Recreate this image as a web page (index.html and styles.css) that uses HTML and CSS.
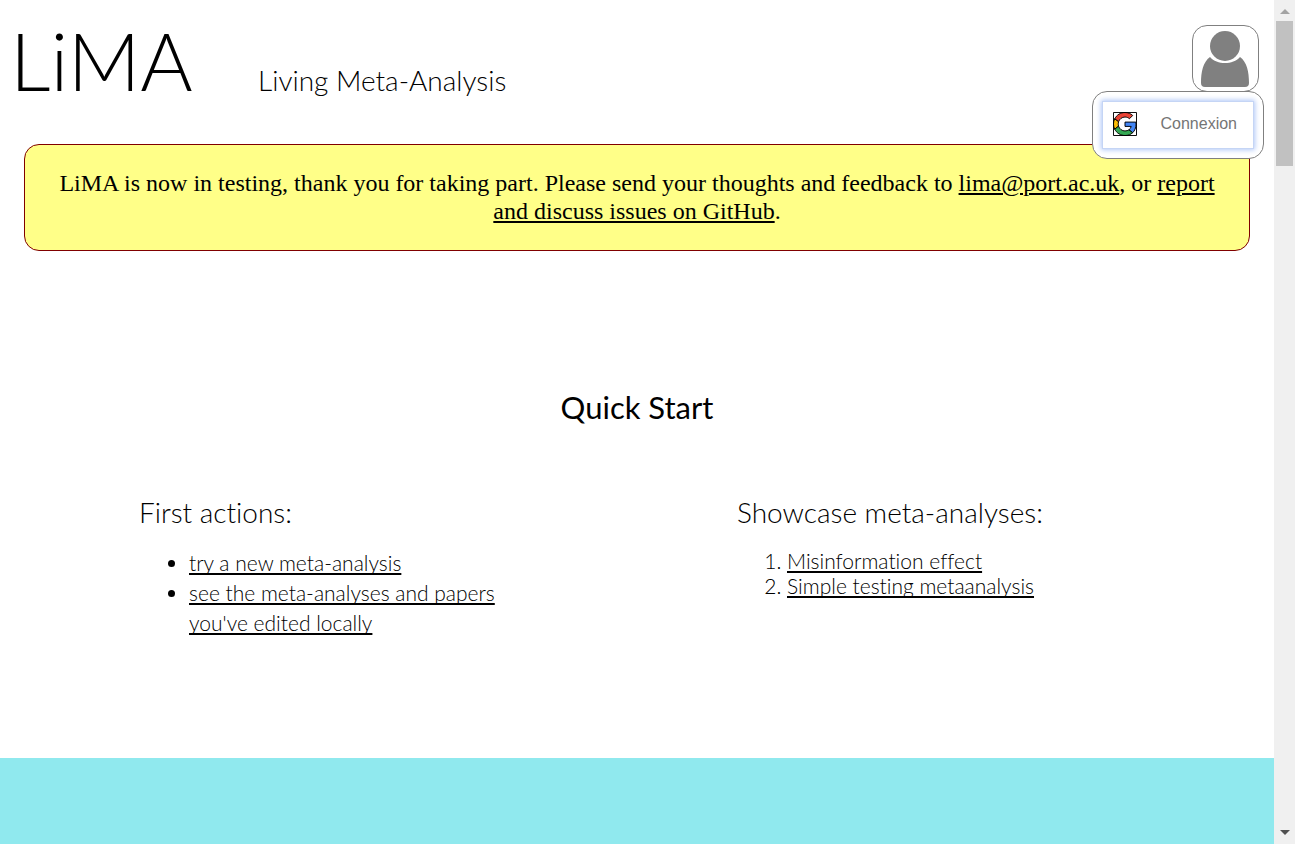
FILE: index.html
```html
<!DOCTYPE html>
<html lang="en">
<head>
<meta charset="utf-8">
<title>LiMA – Living Meta-Analysis</title>
<link rel="stylesheet" href="styles.css">
</head>
<body>
<div class="page">
  <header class="header">
    <a class="logo" href="#">LiMA</a>
    <p class="tagline">Living Meta-Analysis</p>
    <div class="user">
      <button class="avatar" type="button" aria-label="Account">
        <svg viewBox="0 0 65 65" aria-hidden="true">
          <path d="M17 31C10 36 8 46 8 57Q8 61 12 61H52Q56 61 56 57C56 46 54 36 47 31C40 39 24 39 17 31Z"/>
          <circle cx="32" cy="20" r="15"/>
        </svg>
      </button>
      <div class="menu">
        <button class="signin" type="button">
          <svg class="google" viewBox="-1 -1 50 50" aria-hidden="true">
            <path fill="#ea4335" d="M24 9.5c3.54 0 6.71 1.22 9.21 3.6l6.85-6.85C35.9 2.38 30.47 0 24 0 14.62 0 6.51 5.38 2.56 13.22l7.98 6.19C12.43 13.72 17.74 9.5 24 9.5z"/>
            <path fill="#4285f4" d="M46.98 24.55c0-1.57-.15-3.09-.38-4.55H24v9.02h12.94c-.58 2.96-2.26 5.48-4.78 7.18l7.73 6c4.51-4.18 7.09-10.36 7.09-17.65z"/>
            <path fill="#fbbc05" d="M10.53 28.59c-.48-1.45-.76-2.99-.76-4.59s.27-3.14.76-4.59l-7.98-6.19C.92 16.46 0 20.12 0 24c0 3.88.92 7.54 2.56 10.78l7.97-6.19z"/>
            <path fill="#34a853" d="M24 48c6.48 0 11.93-2.13 15.89-5.81l-7.73-6c-2.15 1.45-4.92 2.3-8.16 2.3-6.26 0-11.57-4.22-13.47-9.91l-7.98 6.19C6.51 42.62 14.62 48 24 48z"/>
            <path fill="none" d="M0 0h48v48H0z"/>
          </svg>
          <span>Connexion</span>
        </button>
      </div>
    </div>
  </header>

  <p class="notice">LiMA is now in testing, thank you for taking part. Please send your thoughts and feedback to <a href="#">lima@port.ac.uk</a>, or <a href="#">report and discuss issues on GitHub</a>.</p>

  <main class="quick">
    <h1 class="quick-title">Quick Start</h1>
    <div class="columns">
      <section>
        <h2 class="column-title">First actions:</h2>
        <ul class="list actions">
          <li><a href="#">try a new meta-analysis</a></li>
          <li><a href="#">see the meta-analyses and papers you've edited locally</a></li>
        </ul>
      </section>
      <section>
        <h2 class="column-title">Showcase meta-analyses:</h2>
        <ol class="list showcase">
          <li><a href="#">Misinformation effect</a></li>
          <li><a href="#">Simple testing metaanalysis</a></li>
        </ol>
      </section>
    </div>
  </main>
  <div class="band"></div>
</div>
<div class="scrollbar" aria-hidden="true">
  <svg class="arrow up" viewBox="0 0 10 5"><path d="M0 5L5 0L10 5Z"/></svg>
  <div class="thumb"></div>
  <svg class="arrow down" viewBox="0 0 10 5"><path d="M0 0H10L5 5Z"/></svg>
</div>
</body>
</html>
```
FILE: styles.css
```css
* { box-sizing: border-box; }

body {
  margin: 0;
  height: 100vh;
  overflow: hidden;
  display: grid;
  grid-template-columns: minmax(0, 1fr) 21px;
  background: #fff;
  color: #000;
  font-family: Lato, sans-serif;
  font-weight: 300;
  font-variant-ligatures: none;
}

a { color: inherit; }

.page {
  display: flex;
  flex-direction: column;
  min-height: 0;
}

.header {
  display: flex;
  align-items: baseline;
  gap: 20px;
  height: 144px;
  padding: 13px 15px 0 10px;
}

.logo {
  min-width: 228px;
  font-size: 80px;
  line-height: 94px;
  text-decoration: none;
}

.tagline {
  margin: 0;
  font-size: 28px;
}

.user {
  position: relative;
  align-self: flex-start;
  margin: 12px 0 0 auto;
}

.avatar {
  display: block;
  width: 67px;
  height: 67px;
  padding: 0;
  border: 1px solid #808080;
  border-radius: 15px;
  background: #fff;
}

.avatar svg {
  display: block;
  width: 100%;
  fill: #808080;
}

.menu {
  position: absolute;
  top: 66px;
  right: -5px;
  padding: 9px;
  border: 1px solid #808080;
  border-radius: 15px;
  background: #fff;
}

.signin {
  display: flex;
  align-items: center;
  gap: 24px;
  height: 48px;
  padding: 0 16px 2px 10px;
  border: 1px solid #c5d5f5;
  background: #fff;
  box-shadow: 0 0 5px 1px #b0c8f8;
  color: #757575;
  font: 16px "Liberation Sans", Arial, sans-serif;
}

.google {
  width: 24px;
  height: 24px;
  stroke: #000;
  stroke-width: 2;
}

.notice {
  margin: 0 24px;
  padding: 24px 25px 25px;
  border: 1px solid #800000;
  border-radius: 15px;
  background: #ffff88;
  font: 24px/28px "Liberation Serif", "Times New Roman", serif;
  text-align: center;
}

.notice a { text-underline-offset: 2px; }

.quick {
  padding: 136px 139px 120px;
}

.quick-title {
  margin: 0 0 69px;
  font-size: 31px;
  line-height: 40px;
  font-weight: 400;
  text-align: center;
}

.columns {
  display: grid;
  grid-template-columns: 1fr 1fr;
  gap: 200px;
}

.column-title {
  margin: 0;
  font-size: 28px;
  line-height: 32px;
  font-weight: 300;
}

.list {
  margin: 20px 0 0;
  padding-left: 50px;
  font-size: 21px;
}

.list a {
  text-decoration-thickness: 2px;
  text-underline-offset: 2px;
  text-decoration-skip-ink: none;
}

.actions { line-height: 30px; }

.showcase { line-height: 25px; }

.band {
  flex: 1;
  background: #90e9ee;
}

.scrollbar {
  display: flex;
  flex-direction: column;
  align-items: center;
  padding: 9px 0;
  background: #f0f0f0;
}

.arrow {
  width: 10px;
  height: 5px;
}

.up { fill: #a3a3a3; }

.down {
  margin-top: auto;
  fill: #505050;
}

.thumb {
  width: 17px;
  height: 145px;
  margin-top: 7px;
  background: #c1c1c1;
}
```
